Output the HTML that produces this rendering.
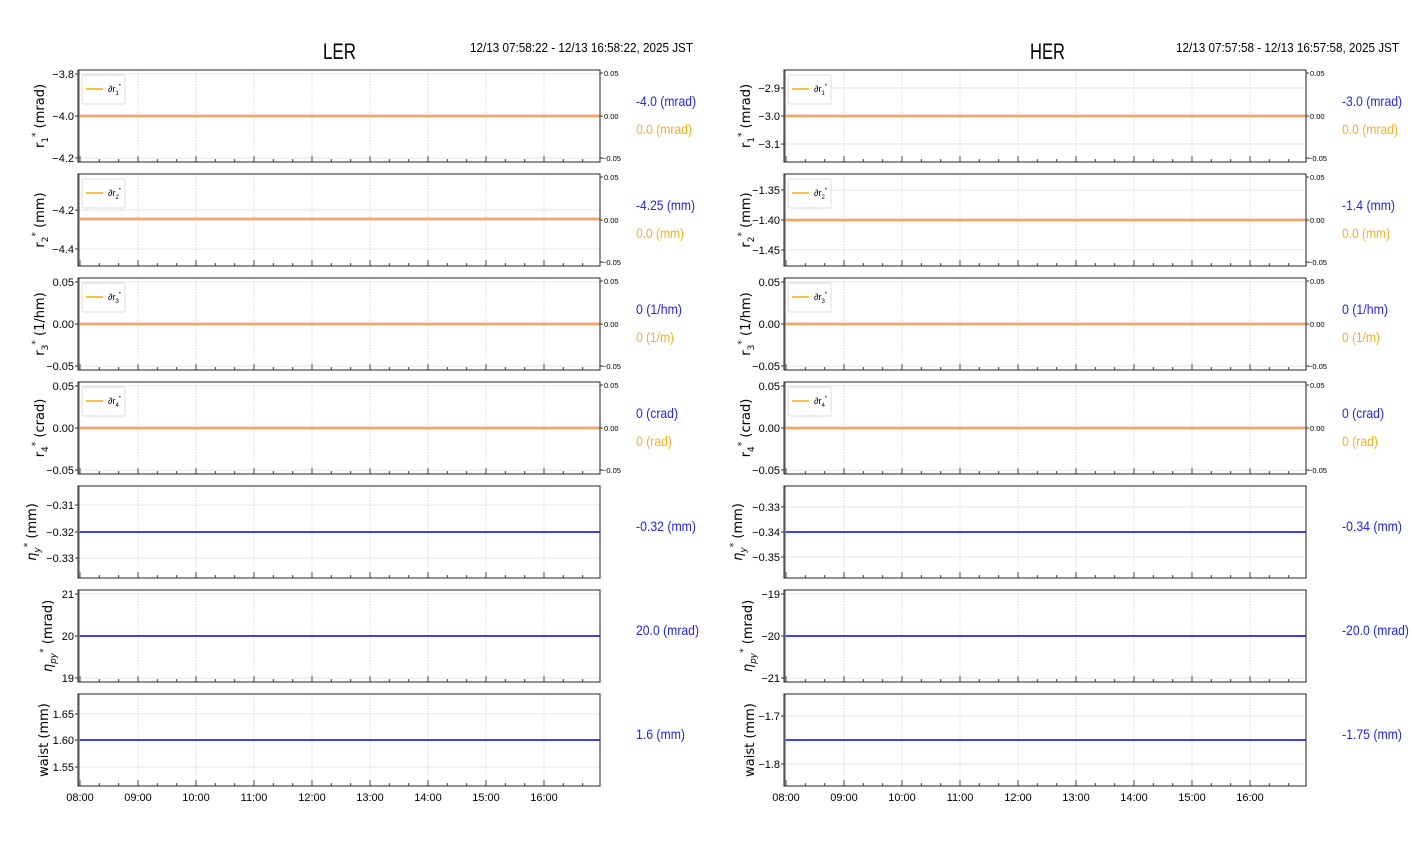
<!DOCTYPE html>
<html><head><meta charset="utf-8"><style>
html,body{margin:0;padding:0;background:#fff;width:1412px;height:864px;overflow:hidden}
svg{display:block}
.t{font-family:"Liberation Sans Narrow","Liberation Sans",sans-serif;fill:#000}
.yl{font-size:11px;text-anchor:end}
.rl{font-size:7.5px}
.xl{font-size:11px;text-anchor:middle}
.lab{font-family:"DejaVu Sans","Liberation Sans",sans-serif;font-size:13px;text-anchor:middle}
.v{font-size:14px}
.b{fill:#2222ff}.o{fill:#ffad1f}
</style></head><body>
<svg width="1412" height="864" viewBox="0 0 1412 864" xmlns="http://www.w3.org/2000/svg">
<defs>
<g id="vg" stroke="#c8c8c8" stroke-width="0.8" stroke-dasharray="1.2,1.6">
<line x1="138" y1="0" x2="138" y2="92"/><line x1="196" y1="0" x2="196" y2="92"/><line x1="254" y1="0" x2="254" y2="92"/><line x1="312" y1="0" x2="312" y2="92"/><line x1="370" y1="0" x2="370" y2="92"/><line x1="428" y1="0" x2="428" y2="92"/><line x1="486" y1="0" x2="486" y2="92"/><line x1="544" y1="0" x2="544" y2="92"/>
</g>
<g id="bt" stroke="#333" stroke-width="0.9">
<path d="M80 92v-6M138 92v-6M196 92v-6M254 92v-6M312 92v-6M370 92v-6M428 92v-6M486 92v-6M544 92v-6"/>
<path d="M99.3 92v-3M118.7 92v-3M157.3 92v-3M176.7 92v-3M215.3 92v-3M234.7 92v-3M273.3 92v-3M292.7 92v-3M331.3 92v-3M350.7 92v-3M389.3 92v-3M408.7 92v-3M447.3 92v-3M466.7 92v-3M505.3 92v-3M524.7 92v-3M563.3 92v-3M582.7 92v-3"/>
<line x1="79" y1="0" x2="79" y2="92" stroke="#888" stroke-width="1.5"/>
</g>
<rect id="fr" x="78" y="0" width="522" height="92" fill="none" stroke="#222" stroke-width="1"/>
<g id="ol"><line x1="78" y1="46" x2="600" y2="46" stroke="#f4b0a8" stroke-width="3"/><line x1="78" y1="46" x2="600" y2="46" stroke="#f5a030" stroke-width="1.2"/></g>
<line id="bl" x1="78" y1="46" x2="600" y2="46" stroke="#0000ee" stroke-width="1.5"/>
<g id="rt"><path d="M600 3h3M600 46h3M600 88h3" stroke="#333"/></g>
<rect id="lg" x="82" y="5" width="43" height="29" rx="2" fill="#fff" stroke="#ddd"/>
</defs>

<text class="t" x="323" y="59" font-size="22" textLength="33" lengthAdjust="spacingAndGlyphs">LER</text>
<text class="t" x="470" y="52" font-size="13" textLength="223" lengthAdjust="spacingAndGlyphs">12/13 07:58:22 - 12/13 16:58:22, 2025 JST</text>
<text class="t" x="1030" y="59" font-size="22" textLength="35" lengthAdjust="spacingAndGlyphs">HER</text>
<text class="t" x="1176" y="52" font-size="13" textLength="223" lengthAdjust="spacingAndGlyphs">12/13 07:57:58 - 12/13 16:57:58, 2025 JST</text>

<g transform="translate(0,70)">
<path d="M78 4h522M78 46h522M78 88h522" stroke="#dcdcdc" stroke-width="0.8"/>
<use href="#vg"/><use href="#ol"/><use href="#bt"/><use href="#fr"/><use href="#rt"/>
<path d="M75 4h3M75 46h3M75 88h3" stroke="#333"/>
<text class="t yl" x="74" y="8">−3.8</text><text class="t yl" x="74" y="50">−4.0</text><text class="t yl" x="74" y="92">−4.2</text>
<text class="t rl" x="604" y="6">0.05</text><text class="t rl" x="604" y="49">0.00</text><text class="t rl" x="602" y="91">−0.05</text>
<use href="#lg"/><line x1="86" y1="19" x2="103" y2="19" stroke="#ffa500" stroke-width="1.5"/><text class="t" x="108" y="22" font-size="9">∂r<tspan font-size="6" dy="3">1</tspan><tspan font-size="6" dy="-7">*</tspan></text>
<text class="t v b" x="636" y="36" textLength="60" lengthAdjust="spacingAndGlyphs">-4.0 (mrad)</text><text class="t v o" x="636" y="64" textLength="56" lengthAdjust="spacingAndGlyphs">0.0 (mrad)</text>
<text class="lab" transform="translate(44,46) rotate(-90)">r<tspan font-size="9" dy="4">1</tspan><tspan font-size="9" dy="-10">*</tspan><tspan dy="6"> (mrad)</tspan></text>
</g>
<g transform="translate(0,174)">
<path d="M78 36h522M78 75h522" stroke="#dcdcdc" stroke-width="0.8"/>
<use href="#vg"/><use href="#ol" transform="translate(0,-1)"/><use href="#bt"/><use href="#fr"/><use href="#rt"/>
<path d="M75 36h3M75 75h3" stroke="#333"/>
<text class="t yl" x="74" y="40">−4.2</text><text class="t yl" x="74" y="79">−4.4</text>
<text class="t rl" x="604" y="6">0.05</text><text class="t rl" x="604" y="49">0.00</text><text class="t rl" x="602" y="91">−0.05</text>
<use href="#lg"/><line x1="86" y1="19" x2="103" y2="19" stroke="#ffa500" stroke-width="1.5"/><text class="t" x="108" y="22" font-size="9">∂r<tspan font-size="6" dy="3">2</tspan><tspan font-size="6" dy="-7">*</tspan></text>
<text class="t v b" x="636" y="36" textLength="59" lengthAdjust="spacingAndGlyphs">-4.25 (mm)</text><text class="t v o" x="636" y="64" textLength="48" lengthAdjust="spacingAndGlyphs">0.0 (mm)</text>
<text class="lab" transform="translate(44,46) rotate(-90)">r<tspan font-size="9" dy="4">2</tspan><tspan font-size="9" dy="-10">*</tspan><tspan dy="6"> (mm)</tspan></text>
</g>
<g transform="translate(0,278)">
<path d="M78 4h522M78 46h522M78 88h522" stroke="#dcdcdc" stroke-width="0.8"/>
<use href="#vg"/><use href="#ol"/><use href="#bt"/><use href="#fr"/><use href="#rt"/>
<path d="M75 4h3M75 46h3M75 88h3" stroke="#333"/>
<text class="t yl" x="74" y="8">0.05</text><text class="t yl" x="74" y="50">0.00</text><text class="t yl" x="74" y="92">−0.05</text>
<text class="t rl" x="604" y="6">0.05</text><text class="t rl" x="604" y="49">0.00</text><text class="t rl" x="602" y="91">−0.05</text>
<use href="#lg"/><line x1="86" y1="19" x2="103" y2="19" stroke="#ffa500" stroke-width="1.5"/><text class="t" x="108" y="22" font-size="9">∂r<tspan font-size="6" dy="3">3</tspan><tspan font-size="6" dy="-7">*</tspan></text>
<text class="t v b" x="636" y="36" textLength="46" lengthAdjust="spacingAndGlyphs">0 (1/hm)</text><text class="t v o" x="636" y="64" textLength="38" lengthAdjust="spacingAndGlyphs">0 (1/m)</text>
<text class="lab" transform="translate(44,46) rotate(-90)">r<tspan font-size="9" dy="4">3</tspan><tspan font-size="9" dy="-10">*</tspan><tspan dy="6"> (1/hm)</tspan></text>
</g>
<g transform="translate(0,382)">
<path d="M78 4h522M78 46h522M78 88h522" stroke="#dcdcdc" stroke-width="0.8"/>
<use href="#vg"/><use href="#ol"/><use href="#bt"/><use href="#fr"/><use href="#rt"/>
<path d="M75 4h3M75 46h3M75 88h3" stroke="#333"/>
<text class="t yl" x="74" y="8">0.05</text><text class="t yl" x="74" y="50">0.00</text><text class="t yl" x="74" y="92">−0.05</text>
<text class="t rl" x="604" y="6">0.05</text><text class="t rl" x="604" y="49">0.00</text><text class="t rl" x="602" y="91">−0.05</text>
<use href="#lg"/><line x1="86" y1="19" x2="103" y2="19" stroke="#ffa500" stroke-width="1.5"/><text class="t" x="108" y="22" font-size="9">∂r<tspan font-size="6" dy="3">4</tspan><tspan font-size="6" dy="-7">*</tspan></text>
<text class="t v b" x="636" y="36" textLength="42" lengthAdjust="spacingAndGlyphs">0 (crad)</text><text class="t v o" x="636" y="64" textLength="36" lengthAdjust="spacingAndGlyphs">0 (rad)</text>
<text class="lab" transform="translate(44,46) rotate(-90)">r<tspan font-size="9" dy="4">4</tspan><tspan font-size="9" dy="-10">*</tspan><tspan dy="6"> (crad)</tspan></text>
</g>
<g transform="translate(0,486)">
<path d="M78 19h522M78 46h522M78 72h522" stroke="#dcdcdc" stroke-width="0.8"/>
<use href="#vg"/><use href="#bl"/><use href="#bt"/><use href="#fr"/>
<path d="M75 19h3M75 46h3M75 72h3" stroke="#333"/>
<text class="t yl" x="74" y="23">−0.31</text><text class="t yl" x="74" y="50">−0.32</text><text class="t yl" x="74" y="76">−0.33</text>
<text class="t v b" x="636" y="45" textLength="60" lengthAdjust="spacingAndGlyphs">-0.32 (mm)</text>
<text class="lab" transform="translate(36,46) rotate(-90)"><tspan font-style="italic">η</tspan><tspan font-size="9" font-style="italic" dy="4">y</tspan><tspan font-size="9" dy="-10">*</tspan><tspan dy="6"> (mm)</tspan></text>
</g>
<g transform="translate(0,590)">
<path d="M78 4h522M78 46h522M78 88h522" stroke="#dcdcdc" stroke-width="0.8"/>
<use href="#vg"/><use href="#bl"/><use href="#bt"/><use href="#fr"/>
<path d="M75 4h3M75 46h3M75 88h3" stroke="#333"/>
<text class="t yl" x="74" y="8">21</text><text class="t yl" x="74" y="50">20</text><text class="t yl" x="74" y="92">19</text>
<text class="t v b" x="636" y="45" textLength="63" lengthAdjust="spacingAndGlyphs">20.0 (mrad)</text>
<text class="lab" transform="translate(52,46) rotate(-90)"><tspan font-style="italic">η</tspan><tspan font-size="9" font-style="italic" dy="4">py</tspan><tspan font-size="9" dy="-10">*</tspan><tspan dy="6"> (mrad)</tspan></text>
</g>
<g transform="translate(0,694)">
<path d="M78 20h522M78 46h522M78 73h522" stroke="#dcdcdc" stroke-width="0.8"/>
<use href="#vg"/><use href="#bl"/><use href="#bt"/><use href="#fr"/>
<path d="M75 20h3M75 46h3M75 73h3" stroke="#333"/>
<text class="t yl" x="74" y="24">1.65</text><text class="t yl" x="74" y="50">1.60</text><text class="t yl" x="74" y="77">1.55</text>
<text class="t v b" x="636" y="45" textLength="49" lengthAdjust="spacingAndGlyphs">1.6 (mm)</text>
<text class="lab" transform="translate(48,46) rotate(-90)">waist (mm)</text>
</g>
<g class="t">
<text class="xl" x="80" y="801">08:00</text><text class="xl" x="138" y="801">09:00</text><text class="xl" x="196" y="801">10:00</text><text class="xl" x="254" y="801">11:00</text><text class="xl" x="312" y="801">12:00</text><text class="xl" x="370" y="801">13:00</text><text class="xl" x="428" y="801">14:00</text><text class="xl" x="486" y="801">15:00</text><text class="xl" x="544" y="801">16:00</text>
</g>

<g transform="translate(706,0)">
<g transform="translate(0,70)">
<path d="M78 18h522M78 46h522M78 74h522" stroke="#dcdcdc" stroke-width="0.8"/>
<use href="#vg"/><use href="#ol"/><use href="#bt"/><use href="#fr"/><use href="#rt"/>
<path d="M75 18h3M75 46h3M75 74h3" stroke="#333"/>
<text class="t yl" x="74" y="22">−2.9</text><text class="t yl" x="74" y="50">−3.0</text><text class="t yl" x="74" y="78">−3.1</text>
<text class="t rl" x="604" y="6">0.05</text><text class="t rl" x="604" y="49">0.00</text><text class="t rl" x="602" y="91">−0.05</text>
<use href="#lg"/><line x1="86" y1="19" x2="103" y2="19" stroke="#ffa500" stroke-width="1.5"/><text class="t" x="108" y="22" font-size="9">∂r<tspan font-size="6" dy="3">1</tspan><tspan font-size="6" dy="-7">*</tspan></text>
<text class="t v b" x="636" y="36" textLength="60" lengthAdjust="spacingAndGlyphs">-3.0 (mrad)</text><text class="t v o" x="636" y="64" textLength="56" lengthAdjust="spacingAndGlyphs">0.0 (mrad)</text>
<text class="lab" transform="translate(44,46) rotate(-90)">r<tspan font-size="9" dy="4">1</tspan><tspan font-size="9" dy="-10">*</tspan><tspan dy="6"> (mrad)</tspan></text>
</g>
<g transform="translate(0,174)">
<path d="M78 16h522M78 46h522M78 76h522" stroke="#dcdcdc" stroke-width="0.8"/>
<use href="#vg"/><use href="#ol"/><use href="#bt"/><use href="#fr"/><use href="#rt"/>
<path d="M75 16h3M75 46h3M75 76h3" stroke="#333"/>
<text class="t yl" x="74" y="20">−1.35</text><text class="t yl" x="74" y="50">−1.40</text><text class="t yl" x="74" y="80">−1.45</text>
<text class="t rl" x="604" y="6">0.05</text><text class="t rl" x="604" y="49">0.00</text><text class="t rl" x="602" y="91">−0.05</text>
<use href="#lg"/><line x1="86" y1="19" x2="103" y2="19" stroke="#ffa500" stroke-width="1.5"/><text class="t" x="108" y="22" font-size="9">∂r<tspan font-size="6" dy="3">2</tspan><tspan font-size="6" dy="-7">*</tspan></text>
<text class="t v b" x="636" y="36" textLength="53" lengthAdjust="spacingAndGlyphs">-1.4 (mm)</text><text class="t v o" x="636" y="64" textLength="48" lengthAdjust="spacingAndGlyphs">0.0 (mm)</text>
<text class="lab" transform="translate(44,46) rotate(-90)">r<tspan font-size="9" dy="4">2</tspan><tspan font-size="9" dy="-10">*</tspan><tspan dy="6"> (mm)</tspan></text>
</g>
<g transform="translate(0,278)">
<path d="M78 4h522M78 46h522M78 88h522" stroke="#dcdcdc" stroke-width="0.8"/>
<use href="#vg"/><use href="#ol"/><use href="#bt"/><use href="#fr"/><use href="#rt"/>
<path d="M75 4h3M75 46h3M75 88h3" stroke="#333"/>
<text class="t yl" x="74" y="8">0.05</text><text class="t yl" x="74" y="50">0.00</text><text class="t yl" x="74" y="92">−0.05</text>
<text class="t rl" x="604" y="6">0.05</text><text class="t rl" x="604" y="49">0.00</text><text class="t rl" x="602" y="91">−0.05</text>
<use href="#lg"/><line x1="86" y1="19" x2="103" y2="19" stroke="#ffa500" stroke-width="1.5"/><text class="t" x="108" y="22" font-size="9">∂r<tspan font-size="6" dy="3">3</tspan><tspan font-size="6" dy="-7">*</tspan></text>
<text class="t v b" x="636" y="36" textLength="46" lengthAdjust="spacingAndGlyphs">0 (1/hm)</text><text class="t v o" x="636" y="64" textLength="38" lengthAdjust="spacingAndGlyphs">0 (1/m)</text>
<text class="lab" transform="translate(44,46) rotate(-90)">r<tspan font-size="9" dy="4">3</tspan><tspan font-size="9" dy="-10">*</tspan><tspan dy="6"> (1/hm)</tspan></text>
</g>
<g transform="translate(0,382)">
<path d="M78 4h522M78 46h522M78 88h522" stroke="#dcdcdc" stroke-width="0.8"/>
<use href="#vg"/><use href="#ol"/><use href="#bt"/><use href="#fr"/><use href="#rt"/>
<path d="M75 4h3M75 46h3M75 88h3" stroke="#333"/>
<text class="t yl" x="74" y="8">0.05</text><text class="t yl" x="74" y="50">0.00</text><text class="t yl" x="74" y="92">−0.05</text>
<text class="t rl" x="604" y="6">0.05</text><text class="t rl" x="604" y="49">0.00</text><text class="t rl" x="602" y="91">−0.05</text>
<use href="#lg"/><line x1="86" y1="19" x2="103" y2="19" stroke="#ffa500" stroke-width="1.5"/><text class="t" x="108" y="22" font-size="9">∂r<tspan font-size="6" dy="3">4</tspan><tspan font-size="6" dy="-7">*</tspan></text>
<text class="t v b" x="636" y="36" textLength="42" lengthAdjust="spacingAndGlyphs">0 (crad)</text><text class="t v o" x="636" y="64" textLength="36" lengthAdjust="spacingAndGlyphs">0 (rad)</text>
<text class="lab" transform="translate(44,46) rotate(-90)">r<tspan font-size="9" dy="4">4</tspan><tspan font-size="9" dy="-10">*</tspan><tspan dy="6"> (crad)</tspan></text>
</g>
<g transform="translate(0,486)">
<path d="M78 21h522M78 46h522M78 71h522" stroke="#dcdcdc" stroke-width="0.8"/>
<use href="#vg"/><use href="#bl"/><use href="#bt"/><use href="#fr"/>
<path d="M75 21h3M75 46h3M75 71h3" stroke="#333"/>
<text class="t yl" x="74" y="25">−0.33</text><text class="t yl" x="74" y="50">−0.34</text><text class="t yl" x="74" y="75">−0.35</text>
<text class="t v b" x="636" y="45" textLength="60" lengthAdjust="spacingAndGlyphs">-0.34 (mm)</text>
<text class="lab" transform="translate(36,46) rotate(-90)"><tspan font-style="italic">η</tspan><tspan font-size="9" font-style="italic" dy="4">y</tspan><tspan font-size="9" dy="-10">*</tspan><tspan dy="6"> (mm)</tspan></text>
</g>
<g transform="translate(0,590)">
<path d="M78 4h522M78 46h522M78 88h522" stroke="#dcdcdc" stroke-width="0.8"/>
<use href="#vg"/><use href="#bl"/><use href="#bt"/><use href="#fr"/>
<path d="M75 4h3M75 46h3M75 88h3" stroke="#333"/>
<text class="t yl" x="74" y="8">−19</text><text class="t yl" x="74" y="50">−20</text><text class="t yl" x="74" y="92">−21</text>
<text class="t v b" x="636" y="45" textLength="67" lengthAdjust="spacingAndGlyphs">-20.0 (mrad)</text>
<text class="lab" transform="translate(46,46) rotate(-90)"><tspan font-style="italic">η</tspan><tspan font-size="9" font-style="italic" dy="4">py</tspan><tspan font-size="9" dy="-10">*</tspan><tspan dy="6"> (mrad)</tspan></text>
</g>
<g transform="translate(0,694)">
<path d="M78 22h522M78 46h522M78 70h522" stroke="#dcdcdc" stroke-width="0.8"/>
<use href="#vg"/><use href="#bl"/><use href="#bt"/><use href="#fr"/>
<path d="M75 22h3M75 70h3" stroke="#333"/>
<text class="t yl" x="74" y="26">−1.7</text><text class="t yl" x="74" y="74">−1.8</text>
<text class="t v b" x="636" y="45" textLength="60" lengthAdjust="spacingAndGlyphs">-1.75 (mm)</text>
<text class="lab" transform="translate(48,46) rotate(-90)">waist (mm)</text>
</g>
<g class="t">
<text class="xl" x="80" y="801">08:00</text><text class="xl" x="138" y="801">09:00</text><text class="xl" x="196" y="801">10:00</text><text class="xl" x="254" y="801">11:00</text><text class="xl" x="312" y="801">12:00</text><text class="xl" x="370" y="801">13:00</text><text class="xl" x="428" y="801">14:00</text><text class="xl" x="486" y="801">15:00</text><text class="xl" x="544" y="801">16:00</text>
</g>
</g>
</svg>
</body></html>
